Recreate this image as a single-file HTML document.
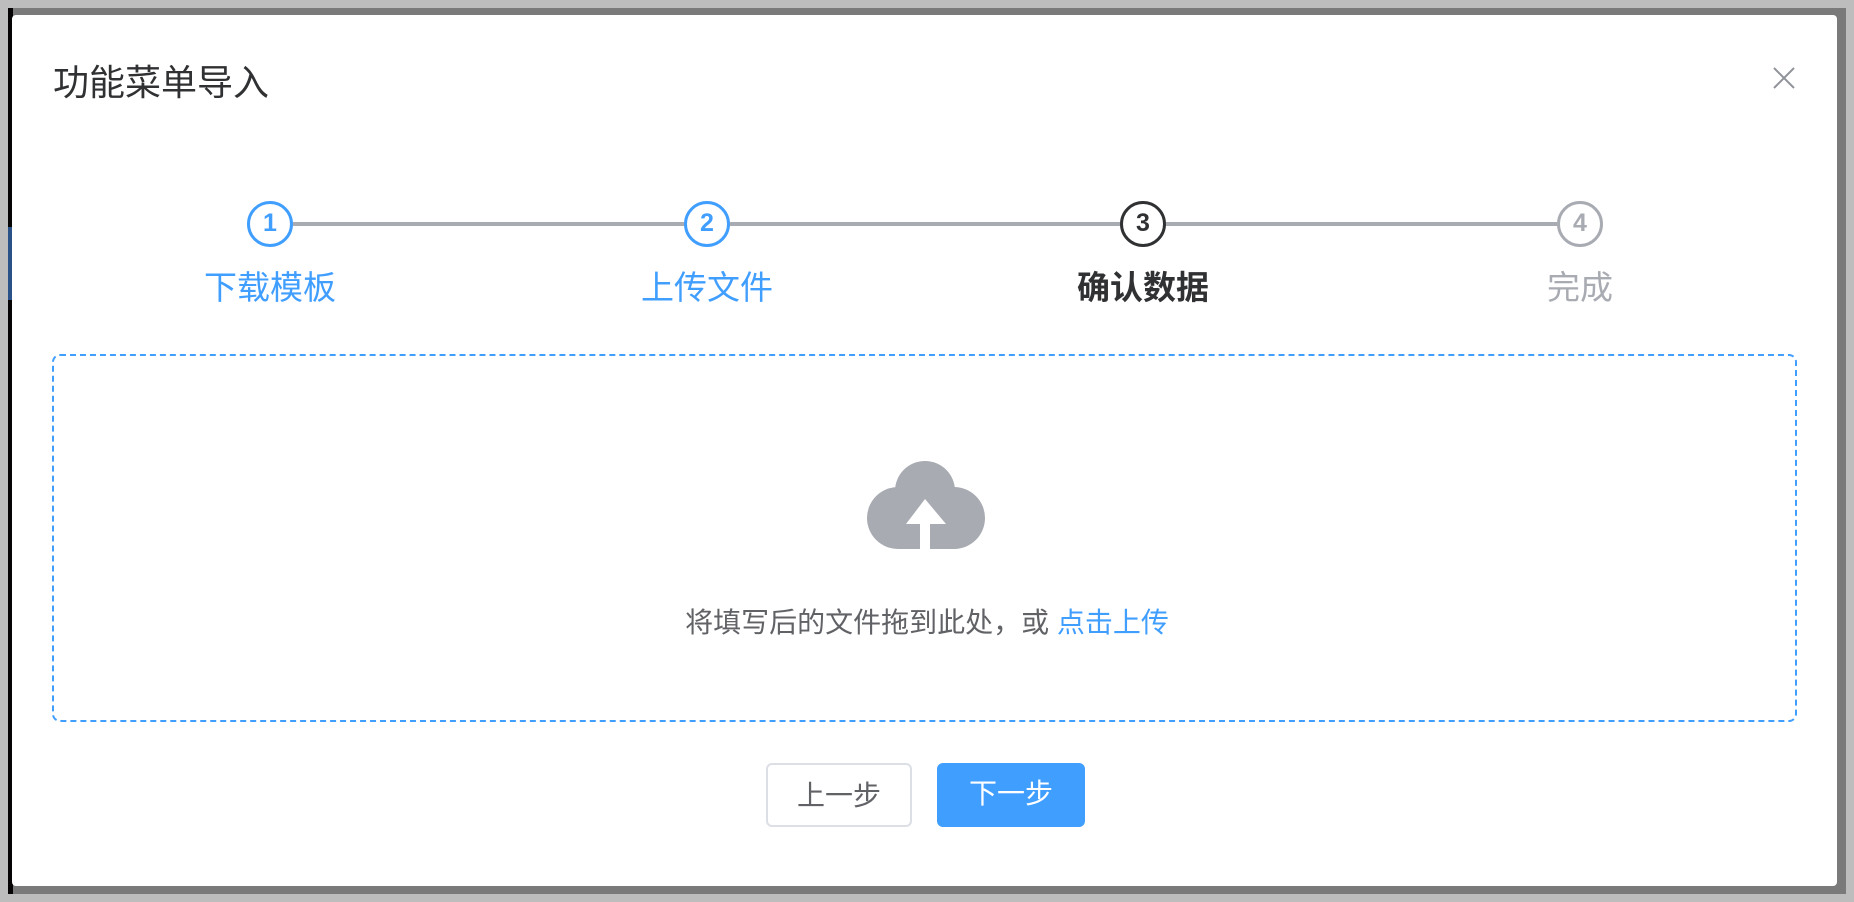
<!DOCTYPE html>
<html><head><meta charset="utf-8"><style>
*{margin:0;padding:0;box-sizing:border-box}
body{width:1854px;height:902px;background:#bdbdbd;position:relative;overflow:hidden;font-family:"Liberation Sans","Noto Sans CJK SC",sans-serif}
.back{position:absolute;left:8px;top:8px;width:1838px;height:886px;background:#7a7a7a}
.lstrip{position:absolute;left:8px;top:8px;width:5px;height:886px;background:#060404}
.lblue{position:absolute;left:8px;top:227px;width:5px;height:73px;background:#2a5288}
.dlg{position:absolute;left:12px;top:15px;width:1825px;height:871px;background:#fff;border-radius:4px}
.title{position:absolute;left:53px;top:62px;font-size:36px;color:#303133;line-height:42px}
.close{position:absolute;left:1772px;top:67px;width:24px;height:22px}
.line{position:absolute;top:222px;height:4px;background:#a8abb2}
.c{position:absolute;top:201px;width:46px;height:46px;border-radius:50%;border:3.5px solid;background:#fff;text-align:center;line-height:39px;font-size:25px;font-weight:bold}
.lab{position:absolute;top:267px;width:240px;margin-left:-120px;text-align:center;font-size:33px;line-height:42px}
.box{position:absolute;left:52px;top:354px;width:1745px;height:368px;border:2px dashed #409eff;border-radius:8px}
.txt{position:absolute;left:0;width:1854px;top:605px;text-align:center;font-size:28px;color:#606266;line-height:36px}
.btn{position:absolute;top:763px;height:64px;border-radius:6px;font-size:28px;text-align:center;line-height:62px}
</style></head><body>
<div class="back"></div><div class="lstrip"></div><div class="lblue"></div>
<div class="dlg"></div>
<div class="title">功能菜单导入</div>
<svg class="close" viewBox="0 0 24 22"><path d="M2 1L22 21M22 1L2 21" stroke="#909399" stroke-width="2" fill="none"/></svg>
<div class="line" style="left:293px;width:391px"></div>
<div class="line" style="left:730px;width:390px"></div>
<div class="line" style="left:1166px;width:391px"></div>
<div class="c" style="left:247px;border-color:#409eff;color:#409eff">1</div>
<div class="c" style="left:684px;border-color:#409eff;color:#409eff">2</div>
<div class="c" style="left:1120px;border-color:#303133;color:#303133">3</div>
<div class="c" style="left:1557px;border-color:#a8abb2;color:#a8abb2">4</div>
<div class="lab" style="left:270px;color:#409eff">下载模板</div>
<div class="lab" style="left:707px;color:#409eff">上传文件</div>
<div class="lab" style="left:1143px;color:#303133;font-weight:bold">确认数据</div>
<div class="lab" style="left:1580px;color:#a8abb2">完成</div>
<div class="box"></div>
<svg style="position:absolute;left:866px;top:460px" width="120" height="90" viewBox="0 0 120 90">
<g fill="#a8abb2"><circle cx="59" cy="31" r="30"/><circle cx="32" cy="58" r="31"/><circle cx="88" cy="58" r="31"/><rect x="32" y="40" width="56" height="49"/></g>
<path d="M59 39L40 64H54V90H64V64H80Z" fill="#fff"/>
</svg>
<div class="txt">将填写后的文件拖到此处，或 <span style="color:#409eff">点击上传</span></div>
<div class="btn" style="left:766px;width:146px;border:2px solid #dcdfe6;color:#606266;background:#fff">上一步</div>
<div class="btn" style="left:937px;width:148px;background:#409eff;color:#fff">下一步</div>
</body></html>
